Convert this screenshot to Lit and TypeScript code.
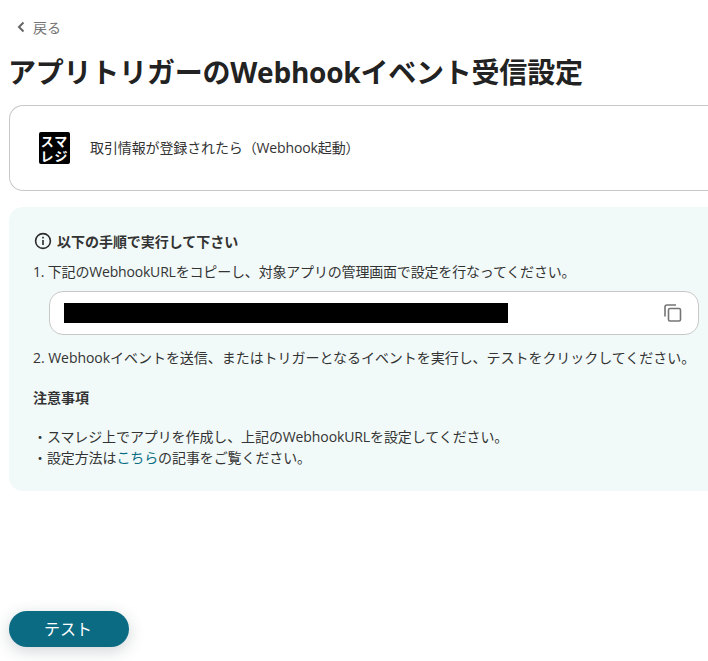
import { LitElement, html, css } from "lit";
import { customElement } from "lit/decorators.js";

@customElement("app-root")
export class AppRoot extends LitElement {
  static styles = css`
    :host {
      display: block;
      width: 708px;
      height: 661px;
      overflow: hidden;
      background: #fff;
      color: #2b2b2b;
      font-family: "Open Sans", "Noto Sans CJK JP", sans-serif;
      font-size: 14px;
    }
    .page { width: 720px; padding: 17px 0 0 9px; box-sizing: border-box; }
    .back { display: flex; align-items: center; gap: 8px; height: 20px; padding-left: 8px; color: #757575; font-size: 14px; }
    .back svg { display: block; }
    h1 { margin: 0 0 0 -1px; padding-top: 17px; font-size: 28px; line-height: 36px; height: 35px; font-weight: 700; color: #222; letter-spacing: -0.22px; }
    .card {
      margin-top: 16px; height: 86px; box-sizing: border-box;
      border: 1px solid #c8c8c8; border-right: 0; border-radius: 14px 0 0 14px;
      display: flex; align-items: center; padding-left: 29px; gap: 20px; font-size: 14px; color: #333;
    }
    .card-text { letter-spacing: -0.12px; position: relative; top: -1px; }
    .logo {
      width: 31px; height: 32px; background: #000; border-radius: 2px; color: #fff;
      display: flex; flex-direction: column; align-items: center; justify-content: center;
      font-weight: 700; font-size: 13px; letter-spacing: 1px;
      font-family: "Noto Sans CJK JP", sans-serif;
    }
    .logo span { display: block; height: 15px; line-height: 15px; overflow: hidden; }
    .panel {
      margin-top: 16px; height: 284px; box-sizing: border-box; background: #f1faf9;
      border-radius: 14px 0 0 14px; padding: 23px 0 0 24px; color: #333;
    }
    .head { display: flex; align-items: center; gap: 5px; height: 22px; font-weight: 700; font-size: 14px; padding-left: 1px; letter-spacing: -0.03px; }
    .line { line-height: 21px; height: 21px; white-space: nowrap; }
    .step1 { margin-top: 9px; letter-spacing: -0.18px; }
    .url {
      margin: 9px 0 0 16px; width: 650px; height: 44px; box-sizing: border-box;
      background: #fff; border: 1px solid #c8c8c8; border-radius: 14px;
      display: flex; align-items: center; justify-content: space-between; padding: 0 16px 0 14px;
    }
    .mask { width: 444px; height: 20px; background: #000; }
    .step2 { margin-top: 12px; letter-spacing: -0.04px; }
    .note { margin-top: 19px; font-weight: 700; }
    .list { margin-top: 18px; letter-spacing: -0.1px; }
    a { color: #0b6e85; text-decoration: none; }
    .test {
      display: block; margin-top: 120px; width: 120px; height: 36px; border: 0; border-radius: 18px;
      background: #0a6b83; color: #fff; font: inherit; font-size: 16px; padding: 0 2px 2px 0;
      box-shadow: 0 4px 16px rgba(40, 60, 70, 0.22);
    }
  `;

  render() {
    return html`
      <div class="page">
        <div class="back">
          <svg width="8" height="12" viewBox="0 0 8 12" fill="none" stroke="#666" stroke-width="2"><path d="M6.5 1.5 2 6l4.5 4.5"/></svg>
          <span>戻る</span>
        </div>
        <h1>アプリトリガーのWebhookイベント受信設定</h1>
        <div class="card">
          <div class="logo"><span>スマ</span><span>レジ</span></div>
          <span class="card-text">取引情報が登録されたら（Webhook起動）</span>
        </div>
        <div class="panel">
          <div class="head">
            <svg width="18" height="18" viewBox="0 0 18 18" fill="none" stroke="#2b2b2b" stroke-width="1.6">
              <circle cx="9" cy="9" r="7.4"/><path d="M9 8v5"/><path d="M9 4.8v1.8"/>
            </svg>
            <span>以下の手順で実行して下さい</span>
          </div>
          <div class="line step1">1. 下記のWebhookURLをコピーし、対象アプリの管理画面で設定を行なってください。</div>
          <div class="url">
            <div class="mask"></div>
            <svg width="18" height="18" viewBox="0 0 18 18" fill="none" stroke="#757575" stroke-width="1.6">
              <path d="M1 12.5V3a2 2 0 0 1 2-2h9"/><rect x="4.5" y="4.5" width="12" height="12.5" rx="1.5"/>
            </svg>
          </div>
          <div class="line step2">2. Webhookイベントを送信、またはトリガーとなるイベントを実行し、テストをクリックしてください。</div>
          <div class="line note">注意事項</div>
          <div class="list">
            <div class="line">・スマレジ上でアプリを作成し、上記のWebhookURLを設定してください。</div>
            <div class="line">・設定方法は<a href="#">こちら</a>の記事をご覧ください。</div>
          </div>
        </div>
        <button class="test">テスト</button>
      </div>
    `;
  }
}
